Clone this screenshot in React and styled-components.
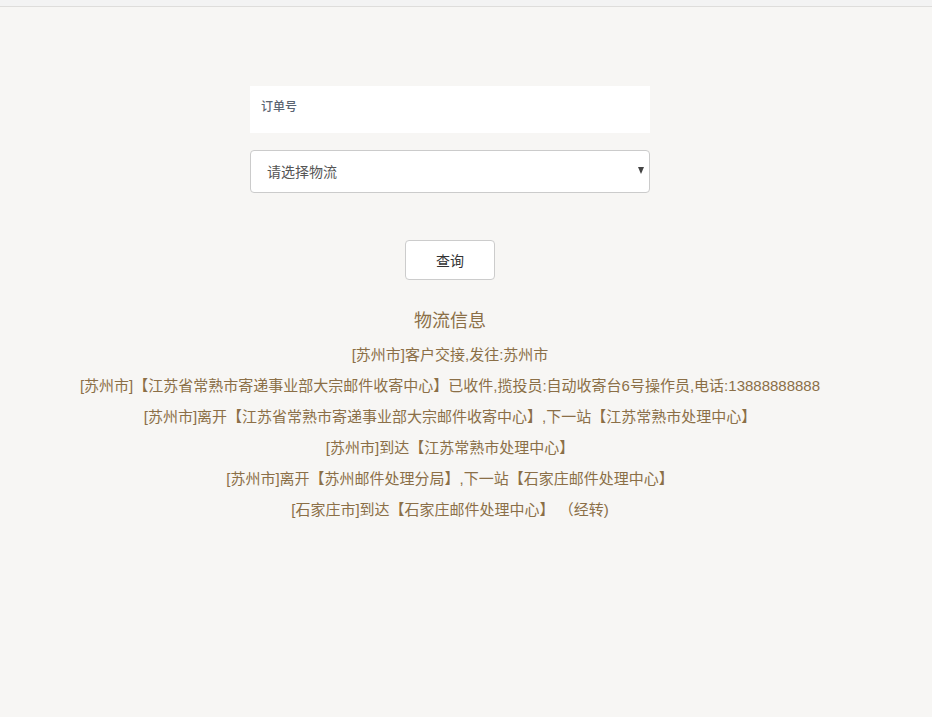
import React from 'react';
import styled, { createGlobalStyle } from 'styled-components';

const GlobalStyle = createGlobalStyle`
  html, body {
    margin: 0;
    padding: 0;
    background: #f7f6f4;
    font-family: "Noto Sans CJK SC", "Liberation Sans", sans-serif;
  }
  body {
    min-height: 717px;
  }
`;

const TopStrip = styled.div`
  height: 6px;
  background: #f3f3f3;
  border-bottom: 1px solid #dedddb;
`;

const Page = styled.div`
  width: 900px;
  display: flex;
  flex-direction: column;
  align-items: center;
  padding-top: 79px;
`;

const Form = styled.form`
  width: 400px;
  display: flex;
  flex-direction: column;
  align-items: center;
`;

const OrderInput = styled.input`
  box-sizing: border-box;
  width: 400px;
  height: 47px;
  border: none;
  outline: none;
  background: #fff;
  padding: 0 11px 8px;
  font-family: inherit;
  font-size: 12px;
  color: #333;
  &::placeholder {
    color: #5b6472;
    font-weight: 500;
  }
`;

const SelectWrap = styled.div`
  position: relative;
  width: 400px;
  margin-top: 17px;
`;

const Select = styled.select`
  box-sizing: border-box;
  width: 100%;
  height: 43px;
  appearance: none;
  border: 1px solid #cbcbcb;
  border-radius: 4px;
  background: #fff;
  padding: 0 16px 2px;
  font-family: inherit;
  font-size: 14px;
  color: #555;
  outline: none;
`;

const Caret = styled.span`
  position: absolute;
  right: 6px;
  top: 17px;
  width: 0;
  height: 0;
  border-left: 3px solid transparent;
  border-right: 3px solid transparent;
  border-top: 7px solid #444;
  pointer-events: none;
`;

const QueryButton = styled.button`
  margin-top: 47px;
  width: 90px;
  height: 40px;
  border: 1px solid #cccccc;
  border-radius: 4px;
  background: #fff;
  font-family: inherit;
  font-size: 14px;
  color: #333;
  cursor: pointer;
`;

const Info = styled.section`
  margin-top: 28px;
  display: flex;
  flex-direction: column;
  align-items: center;
  color: #8b6f47;
  font-family: "Liberation Sans", "Noto Sans CJK SC", sans-serif;
`;

const InfoTitle = styled.h3`
  margin: 0 0 5px;
  font-size: 18px;
  font-weight: 400;
  line-height: 26px;
`;

const Step = styled.p`
  margin: 0;
  font-size: 15px;
  line-height: 31px;
  white-space: pre;
`;

const steps = [
  '[苏州市]客户交接,发往:苏州市',
  '[苏州市]【江苏省常熟市寄递事业部大宗邮件收寄中心】已收件,揽投员:自动收寄台6号操作员,电话:13888888888',
  '[苏州市]离开【江苏省常熟市寄递事业部大宗邮件收寄中心】,下一站【江苏常熟市处理中心】',
  '[苏州市]到达【江苏常熟市处理中心】',
  '[苏州市]离开【苏州邮件处理分局】,下一站【石家庄邮件处理中心】',
  '[石家庄市]到达【石家庄邮件处理中心】 （经转)',
];

const App = () => (
  <>
    <GlobalStyle />
    <TopStrip />
    <Page>
      <Form onSubmit={e => e.preventDefault()}>
        <OrderInput placeholder="订单号" />
        <SelectWrap>
          <Select defaultValue="">
            <option value="">请选择物流</option>
          </Select>
          <Caret />
        </SelectWrap>
        <QueryButton type="submit">查询</QueryButton>
      </Form>
      <Info>
        <InfoTitle>物流信息</InfoTitle>
        {steps.map(step => (
          <Step key={step}>{step}</Step>
        ))}
      </Info>
    </Page>
  </>
);

export default App;
